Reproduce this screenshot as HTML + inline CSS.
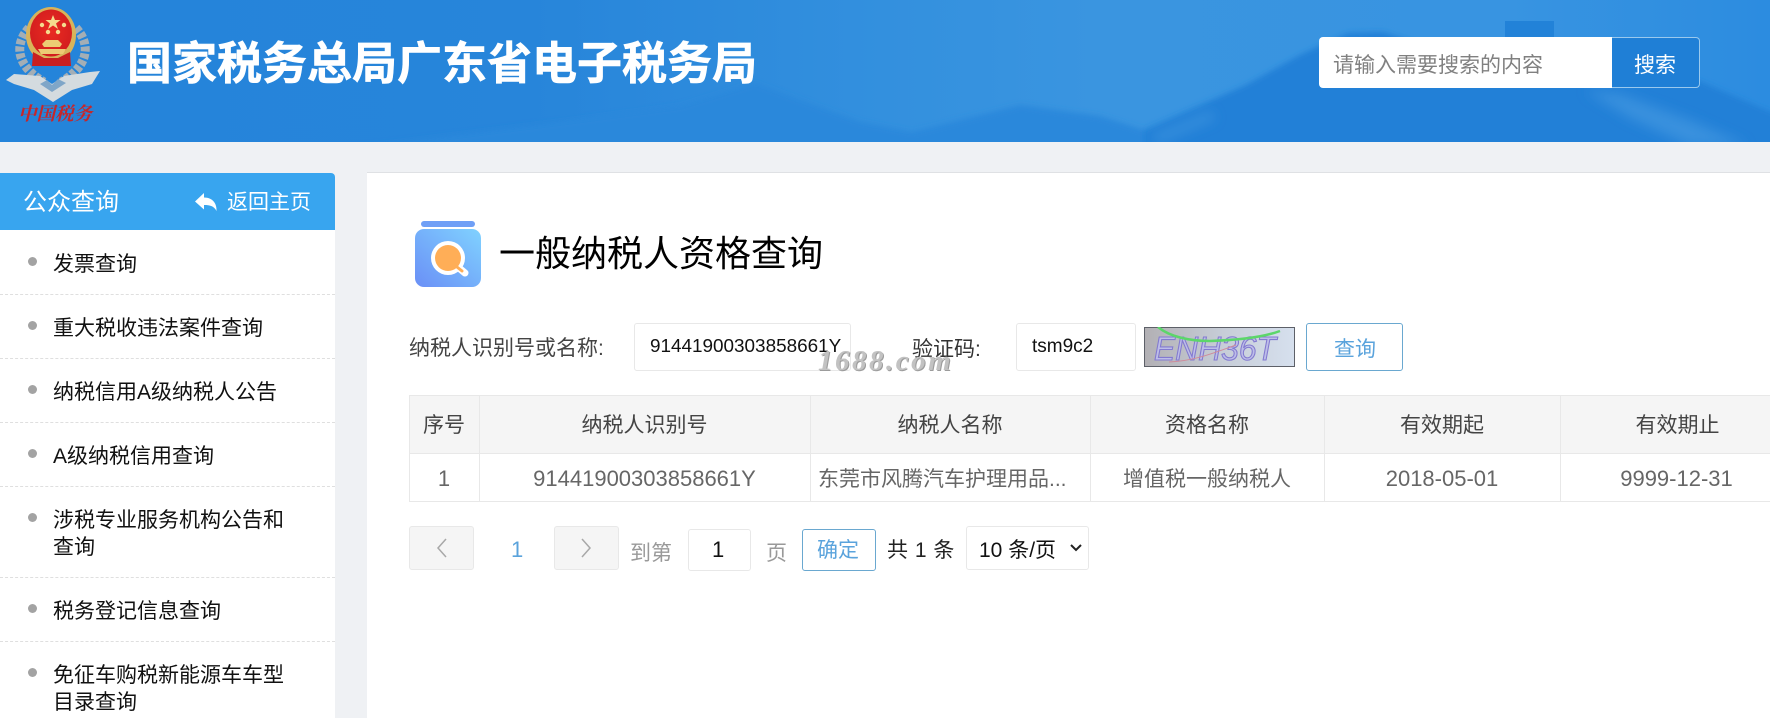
<!DOCTYPE html>
<html lang="zh-CN"><head><meta charset="utf-8"><title>一般纳税人资格查询</title>
<style>
html,body{margin:0;padding:0;width:1770px;height:718px;overflow:hidden;background:#eff1f4;}
body{position:relative;font-family:"Liberation Sans","Noto Sans CJK SC",sans-serif;color:#111;}
.a{position:absolute;white-space:nowrap;}
.t{position:absolute;white-space:nowrap;line-height:30px;height:30px;font-size:21px;}
.c{text-align:center;}
.dash{position:absolute;left:0;width:335px;border-top:1px dashed #dfdfdf;}
.dot{position:absolute;left:28px;width:9px;height:9px;border-radius:50%;background:#a3a3a3;}
.b{position:absolute;box-sizing:border-box;background:#fff;border:1px solid #e8e8e8;border-radius:3px;}
.v{position:absolute;width:1px;background:#e8e8e8;}
.h{position:absolute;height:1px;left:409px;right:0;background:#e8e8e8;}
</style></head><body>

<!-- header -->
<svg class="a" style="left:0;top:0" width="1770" height="142" viewBox="0 0 1770 142">
<defs>
<linearGradient id="hb" x1="0" y1="0" x2="1" y2="0"><stop offset="0" stop-color="#2484da"/><stop offset=".3" stop-color="#2785da"/><stop offset=".5" stop-color="#3390de"/><stop offset=".62" stop-color="#3a95e0"/><stop offset=".85" stop-color="#3894e1"/><stop offset="1" stop-color="#2c8ce0"/></linearGradient>
<filter id="bl" x="-5%" y="-20%" width="110%" height="140%"><feGaussianBlur stdDeviation="3"/></filter>
<filter id="bl2" x="-20%" y="-50%" width="140%" height="200%"><feGaussianBlur stdDeviation="6"/></filter>
<radialGradient id="e" cx=".5" cy=".45" r=".6"><stop offset="0" stop-color="#ea2b22"/><stop offset="1" stop-color="#d01c1e"/></radialGradient>
</defs>
<rect width="1770" height="142" fill="url(#hb)"/>
<g filter="url(#bl)">
<path d="M340 150 L560 122 L680 106 L755 83 L800 100 L860 122 L912 132 L1020 105 L1100 116 L1144 130 L1246 85 L1300 55 L1348 33 L1383 32 L1440 50 L1560 60 L1697 80 L1780 116 L1780 150Z" fill="#2a88db"/>
<path d="M1144 150 L1144 130 L1246 85 L1300 55 L1348 33 L1383 32 L1440 50 L1560 60 L1697 80 L1780 116 L1780 150Z" fill="#2180d7"/>
</g>
<rect x="1505" y="21" width="49" height="20" fill="#2282d8"/>
<g filter="url(#bl2)">
<path d="M1150 137 L1210 112 L1216 118 L1160 142Z" fill="#4ea2e4" opacity=".5"/>
<path d="M1585 90 L1620 94 L1690 120 L1748 146 L1690 146 L1630 118Z" fill="#4a9fe4" opacity=".55"/>
</g>
<!-- emblem -->
<g>
<path d="M29 28 C14 44 16 66 44 82" fill="none" stroke="#a4aeb5" stroke-width="9" stroke-dasharray="5 2"/>
<path d="M76 28 C91 44 89 66 61 82" fill="none" stroke="#a4aeb5" stroke-width="9" stroke-dasharray="5 2"/>
<path d="M6 80 L14 74 L40 76 L52 84 L64 76 L90 72 L100 71 L92 84 L72 90 L53 102 L34 90 L14 84Z" fill="#d4dbdf"/>
<path d="M40 84 L52 92 L66 83 L58 79 L52 85 L47 80Z" fill="#7fa6c8"/>
<ellipse cx="51" cy="35" rx="25" ry="28" fill="#d8b45a"/>
<ellipse cx="51" cy="33" rx="21" ry="23.500" fill="url(#e)"/>
<path d="M33 52 L32 66 L71 66 L70 52 L58 58 L44 58Z" fill="#c81f20"/>
<path d="M53 15l2 5h5.500l-4.500 3.500 2 5.500-5-3.500-5 3.500 2-5.500-4.500-3.500h5.500z" fill="#f5dc8e"/>
<circle cx="42" cy="25" r="2.200" fill="#f5dc8e"/><circle cx="64" cy="25" r="2.200" fill="#f5dc8e"/><circle cx="48" cy="32" r="2.200" fill="#f5dc8e"/><circle cx="58" cy="32" r="2.200" fill="#f5dc8e"/>
<path d="M42 44 L46 40 H58 L62 44 L60 47 H44Z M38 49 H66 L63 54 H41Z" fill="#eccb74"/>
</g>
</svg>
<div class="a" style="left:18px;top:101px;width:78px;height:28px;line-height:28px;font-size:18.500px;color:#c6262a;font-family:'Liberation Serif','Noto Serif CJK SC',serif;font-style:italic;font-weight:700;">中国税务</div>
<div class="a" style="left:127px;top:37px;height:54px;line-height:54px;font-size:45px;font-weight:700;color:#fff;-webkit-text-stroke:.6px #fff;">国家税务总局广东省电子税务局</div>

<div class="a" style="left:1319px;top:37px;width:294px;height:51px;background:#fff;border-radius:4px 0 0 4px;"></div>
<div class="a" style="left:1612px;top:37px;width:88px;height:51px;box-sizing:border-box;background:#1f7fd6;border:1px solid #9ac9ee;border-left:0;border-radius:0 4px 4px 0;"></div>
<div class="t" style="left:1333px;top:51px;color:#808080;">请输入需要搜索的内容</div>
<div class="t" style="left:1634px;top:51px;color:#fff;">搜索</div>

<!-- sidebar -->
<div class="a" style="left:0;top:173px;width:335px;height:545px;background:#fff;border-radius:0 4px 0 0;"></div>
<div class="a" style="left:0;top:173px;width:335px;height:57px;background:#38a5ef;border-radius:0 4px 0 0;"></div>
<div class="t" style="left:23px;top:188px;font-size:24px;color:#fff;">公众查询</div>
<svg class="a" style="left:194px;top:192px" width="24" height="20" viewBox="0 0 24 20"><path d="M1 9.500 L10 1 V5.500 C19 5.500 23 12 22.500 19 C20 14 16 13 10 13 V17.500Z" fill="#fff"/></svg>
<div class="t" style="left:227px;top:188px;color:#fff;">返回主页</div>

<div class="dot" style="top:257px"></div><div class="t" style="left:53px;top:250px">发票查询</div><div class="dash" style="top:294px"></div>
<div class="dot" style="top:321px"></div><div class="t" style="left:53px;top:314px">重大税收违法案件查询</div><div class="dash" style="top:358px"></div>
<div class="dot" style="top:385px"></div><div class="t" style="left:53px;top:378px">纳税信用A级纳税人公告</div><div class="dash" style="top:422px"></div>
<div class="dot" style="top:449px"></div><div class="t" style="left:53px;top:442px">A级纳税信用查询</div><div class="dash" style="top:486px"></div>
<div class="dot" style="top:513px"></div><div class="t" style="left:53px;top:506px">涉税专业服务机构公告和</div><div class="t" style="left:53px;top:533px">查询</div><div class="dash" style="top:577px"></div>
<div class="dot" style="top:604px"></div><div class="t" style="left:53px;top:597px">税务登记信息查询</div><div class="dash" style="top:641px"></div>
<div class="dot" style="top:668px"></div><div class="t" style="left:53px;top:661px">免征车购税新能源车车型</div><div class="t" style="left:53px;top:688px">目录查询</div>

<!-- main panel -->
<div class="a" style="left:367px;top:172px;width:1403px;height:546px;background:#fff;border-top:1px solid #dfe1e4;box-sizing:border-box;"></div>

<svg class="a" style="left:410px;top:216px" width="76" height="76" viewBox="0 0 76 76">
<defs><linearGradient id="ic" x1="1" y1="0" x2="0" y2="1"><stop offset="0" stop-color="#80d2ff"/><stop offset="1" stop-color="#6a8ff6"/></linearGradient></defs>
<rect x="11" y="5" width="54" height="6" rx="3" fill="#6f9ff6"/>
<rect x="5" y="13" width="66" height="58" rx="9" fill="url(#ic)"/>
<path d="M49 52 L55 57" stroke="#fff" stroke-width="7" stroke-linecap="round"/>
<circle cx="38" cy="42" r="17" fill="#fff"/>
<circle cx="38" cy="42" r="13" fill="#ffae57"/>
<path d="M47 51 L52 55" stroke="#ffae57" stroke-width="3" stroke-linecap="round"/>
</svg>
<div class="a" style="left:499px;top:230px;height:48px;line-height:48px;font-size:36px;color:#000;">一般纳税人资格查询</div>

<div class="t" style="left:409px;top:334px;color:#444;">纳税人识别号或名称:</div>
<div class="b" style="left:634px;top:323px;width:217px;height:48px;"></div>
<div class="t" style="left:650px;top:332px;font-size:18.900px;color:#111;">91441900303858661Y</div>
<div class="t" style="left:912px;top:335px;color:#333;">验证码:</div>
<div class="b" style="left:1016px;top:323px;width:120px;height:48px;"></div>
<div class="t" style="left:1032px;top:332px;font-size:19px;color:#111;">tsm9c2</div>

<svg class="a" style="left:1144px;top:327px" width="151" height="40" viewBox="0 0 151 40">
<defs><linearGradient id="cg" x1="0" y1="0" x2="1" y2="0"><stop offset="0" stop-color="#b2b0b4"/><stop offset=".5" stop-color="#c6ccd6"/><stop offset="1" stop-color="#d6e0ee"/></linearGradient></defs>
<rect x=".5" y=".5" width="150" height="39" fill="url(#cg)" stroke="#5d6068"/>
<text x="10" y="33" font-family="Liberation Sans, sans-serif" font-style="italic" font-size="33" fill="#bdbde8" stroke="#837ad0" stroke-width="1.100" textLength="122" lengthAdjust="spacingAndGlyphs">ENH36T</text>
<path d="M14 0 C26 10 46 14 66 14 C96 13 120 10 136 4" fill="none" stroke="#5cd66a" stroke-width="2.500"/>
<path d="M25 35 C50 34 70 26 92 18" fill="none" stroke="#cf8a9a" stroke-width="1"/>
</svg>
<div class="b" style="left:1306px;top:323px;width:97px;height:48px;border-color:#6aa8d0;"></div>
<div class="t" style="left:1334px;top:335px;color:#5aa3dc;">查询</div>
<div class="a" style="left:818px;top:342px;height:38px;line-height:38px;font-size:29px;font-weight:700;font-style:italic;letter-spacing:2.500px;font-family:'Liberation Serif',serif;color:#c2c2c2;text-shadow:1px 1px 0 #9c9c9c;">1688.com</div>

<!-- table -->
<div class="a" style="left:409px;top:395px;width:1361px;height:58px;background:#f5f5f5;"></div>
<div class="h" style="top:395px"></div><div class="h" style="top:453px"></div><div class="h" style="top:501px"></div>
<div class="v" style="left:409px;top:395px;height:107px"></div>
<div class="v" style="left:479px;top:395px;height:107px"></div>
<div class="v" style="left:810px;top:395px;height:107px"></div>
<div class="v" style="left:1090px;top:395px;height:107px"></div>
<div class="v" style="left:1324px;top:395px;height:107px"></div>
<div class="v" style="left:1560px;top:395px;height:107px"></div>

<div class="t c" style="left:409px;width:70px;top:411px;color:#444;">序号</div>
<div class="t c" style="left:479px;width:331px;top:411px;color:#444;">纳税人识别号</div>
<div class="t c" style="left:810px;width:280px;top:411px;color:#444;">纳税人名称</div>
<div class="t c" style="left:1090px;width:234px;top:411px;color:#444;">资格名称</div>
<div class="t c" style="left:1324px;width:236px;top:411px;color:#444;">有效期起</div>
<div class="t c" style="left:1560px;width:235px;top:411px;color:#444;">有效期止</div>

<div class="t c" style="left:409px;width:70px;top:464px;color:#666;font-size:22px;">1</div>
<div class="t c" style="left:479px;width:331px;top:464px;color:#666;font-size:22px;">91441900303858661Y</div>
<div class="t" style="left:818px;top:465px;color:#666;">东莞市风腾汽车护理用品...</div>
<div class="t c" style="left:1090px;width:234px;top:465px;color:#666;">增值税一般纳税人</div>
<div class="t c" style="left:1324px;width:236px;top:464px;color:#666;font-size:22px;">2018-05-01</div>
<div class="t c" style="left:1559px;width:235px;top:464px;color:#666;font-size:22px;">9999-12-31</div>

<!-- pagination -->
<div class="b" style="left:409px;top:526px;width:65px;height:44px;background:#f5f5f5;"></div>
<svg class="a" style="left:434px;top:536px" width="16" height="24" viewBox="0 0 16 24"><path d="M12 3 L4 12 L12 21" fill="none" stroke="#a8a8a8" stroke-width="1.500"/></svg>
<div class="t" style="left:511px;top:535px;color:#5aa3dc;font-size:22px;">1</div>
<div class="b" style="left:554px;top:526px;width:65px;height:44px;background:#f5f5f5;"></div>
<svg class="a" style="left:578px;top:536px" width="16" height="24" viewBox="0 0 16 24"><path d="M4 3 L12 12 L4 21" fill="none" stroke="#a8a8a8" stroke-width="1.500"/></svg>
<div class="t" style="left:630px;top:539px;color:#999;">到第</div>
<div class="b" style="left:688px;top:529px;width:63px;height:42px;"></div>
<div class="t" style="left:712px;top:535px;color:#111;font-size:22px;">1</div>
<div class="t" style="left:766px;top:539px;color:#999;">页</div>
<div class="b" style="left:802px;top:529px;width:74px;height:42px;border-color:#6aa8d0;"></div>
<div class="t" style="left:817px;top:536px;color:#5aa3dc;">确定</div>
<div class="t" style="left:887px;top:536px;color:#222;word-spacing:1px;">共 1 条</div>
<div class="b" style="left:966px;top:526px;width:123px;height:44px;"></div>
<div class="t" style="left:979px;top:536px;color:#111;">10 条/页</div>
<svg class="a" style="left:1069px;top:543px" width="14" height="10" viewBox="0 0 14 10"><path d="M2 2 L7 7 L12 2" fill="none" stroke="#222" stroke-width="2"/></svg>
</body></html>
